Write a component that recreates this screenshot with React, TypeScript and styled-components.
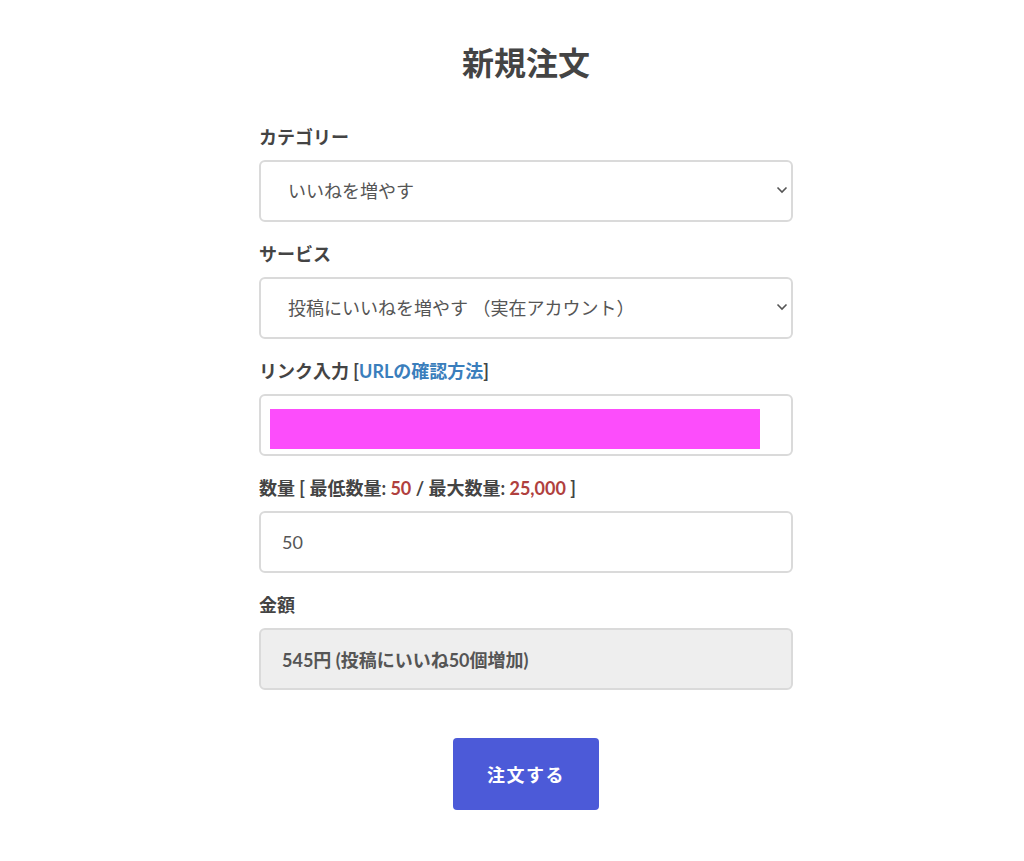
import React, { ReactElement, useState } from 'react';
import styled, { createGlobalStyle } from 'styled-components';

// Global
const GlobalStyle = createGlobalStyle`
  body {
    margin: 0;
    background: #fff;
    font-family: 'Lato', 'Noto Sans CJK JP', sans-serif;
    color: #444;
  }
`;

// Styled Components
const Page = styled.div`
  padding: 42px 0 40px 28px;
`;

const Form = styled.form`
  width: 534px;
  margin: 0 auto;
  display: flex;
  flex-direction: column;
`;

const Title = styled.h1`
  margin: 0 0 41px 0;
  font-size: 32px;
  line-height: 42px;
  font-weight: 700;
  text-align: center;
  color: #444;
`;

const Group = styled.div`
  display: flex;
  flex-direction: column;
  margin-bottom: 20px;
`;

const Label = styled.label`
  display: block;
  height: 24px;
  font-size: 18px;
  line-height: 24px;
  font-weight: 700;
  color: #444;
  margin-bottom: 11px;
`;

const Link = styled.a`
  color: #3a7ebc;
  text-decoration: none;
`;

const Red = styled.span`
  color: #b0403e;
`;

const SelectWrap = styled.div`
  position: relative;
`;

const Select = styled.select`
  width: 100%;
  height: 62px;
  box-sizing: border-box;
  padding: 0 40px 0 27px;
  border: 2px solid #dadada;
  border-radius: 6px;
  background: #fff;
  font-family: inherit;
  font-size: 18px;
  color: #555;
  appearance: none;
  outline: none;
`;

const Chevron = styled.svg`
  position: absolute;
  right: 5px;
  top: 26px;
  pointer-events: none;
`;

const Field = styled.div<{ $muted?: boolean }>`
  height: 62px;
  box-sizing: border-box;
  border: 2px solid #dadada;
  border-radius: 6px;
  background: ${({ $muted }) => ($muted ? '#eeeeee' : '#fff')};
  display: flex;
  align-items: center;
  padding: 0 9px;
`;

const Input = styled.input`
  width: 100%;
  border: none;
  outline: none;
  padding: 0 12px;
  font-family: inherit;
  font-size: 18px;
  color: #555;
  background: transparent;
`;

const Masked = styled.div`
  width: 490px;
  height: 40px;
  margin-top: 8px;
  background: #fc4dfb;
`;

const Price = styled.span`
  padding-left: 12px;
  font-size: 18px;
  font-weight: 700;
  color: #555;
`;

const Submit = styled.button`
  align-self: center;
  margin-top: 28px;
  width: 146px;
  height: 72px;
  border: none;
  border-radius: 4px;
  background: #4c5ad8;
  color: #fff;
  font-family: inherit;
  font-size: 18px;
  font-weight: 700;
  letter-spacing: 1.5px;
  cursor: pointer;
`;

const ChevronIcon = (): ReactElement => (
  <Chevron width="12" height="8" viewBox="0 0 12 8">
    <path d="M1.5 1.5 L6 6 L10.5 1.5" fill="none" stroke="#555" strokeWidth="1.6" />
  </Chevron>
);

const App = (): ReactElement => {
  const [quantity, setQuantity] = useState<string>('50');

  return (
    <Page>
      <GlobalStyle />
      <Form onSubmit={(e) => e.preventDefault()}>
        <Title>新規注文</Title>

        <Group>
          <Label>カテゴリー</Label>
          <SelectWrap>
            <Select defaultValue="like">
              <option value="like">いいねを増やす</option>
            </Select>
            <ChevronIcon />
          </SelectWrap>
        </Group>

        <Group>
          <Label>サービス</Label>
          <SelectWrap>
            <Select defaultValue="real">
              <option value="real">投稿にいいねを増やす （実在アカウント）</option>
            </Select>
            <ChevronIcon />
          </SelectWrap>
        </Group>

        <Group>
          <Label>
            リンク入力 [<Link href="#">URLの確認方法</Link>]
          </Label>
          <Field>
            <Masked />
          </Field>
        </Group>

        <Group>
          <Label>
            数量 [ 最低数量: <Red>50</Red> / 最大数量: <Red>25,000</Red> ]
          </Label>
          <Field>
            <Input
              type="text"
              value={quantity}
              onChange={(e) => setQuantity(e.target.value)}
            />
          </Field>
        </Group>

        <Group>
          <Label>金額</Label>
          <Field $muted>
            <Price>545円 (投稿にいいね50個増加)</Price>
          </Field>
        </Group>

        <Submit type="submit">注文する</Submit>
      </Form>
    </Page>
  );
};

export default App;
